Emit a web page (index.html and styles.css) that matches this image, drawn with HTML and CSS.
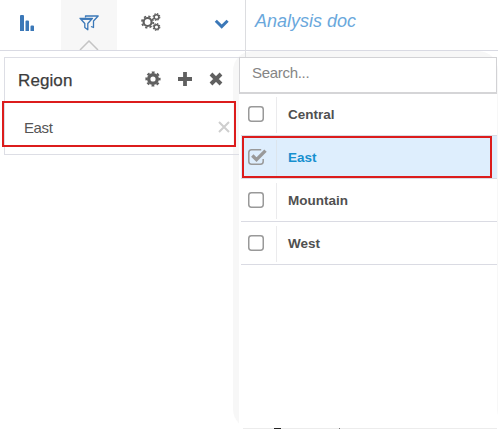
FILE: index.html
```html
<!DOCTYPE html>
<html lang="en">
<head>
<meta charset="utf-8">
<title>Analysis doc</title>
<link rel="stylesheet" href="styles.css">
</head>
<body>
<div class="app">
  <header class="header">
    <nav class="tabs">
      <div class="tab">
        <svg class="icon-bars" width="15" height="16" viewBox="0 0 15 16"><path fill="#3b78b8" d="M0 1q0-1 1-1h2q1 0 1 1v15H0zM5.500 6.500q0-1 1-1h1.500q1 0 1 1V16H5.500zM10.500 11.500q0-1 1-1h1.500q1 0 1 1V16h-3.500z"/></svg>
      </div>
      <div class="tab tab-active">
        <svg class="icon-filter" width="21" height="17" viewBox="0 0 21 17" fill="none" stroke="#3b78b8" stroke-width="1.300" stroke-linejoin="round"><path d="M6.500 3.500V2h12.700L14.500 7v6.500l-2.500-1"/><path fill="#f7f7f7" d="M1 4.300h12.500L8.800 9.500v6.300l-3-2.300v-4z"/><path d="M2.500 5.300h10"/></svg>
        <svg class="tab-caret" width="20" height="10" viewBox="0 0 20 10"><path d="M1 10 10 1l9 9" fill="none" stroke="#c4c4c4" stroke-width="1.500"/></svg>
      </div>
      <div class="tab tab-gears">
        <svg class="icon-gears" width="20" height="18" viewBox="0 0 20 18" fill="none" stroke="#606060"><circle cx="6.600" cy="9" r="4" stroke-width="2.200"/><circle cx="6.600" cy="9" r="5.700" stroke-width="1.700" stroke-dasharray="2.240 2.240"/><circle cx="15.500" cy="4" r="2.300" stroke-width="1.500"/><circle cx="15.500" cy="4" r="3.300" stroke-width="1.200" stroke-dasharray="1.480 1.110"/><circle cx="15.500" cy="14" r="2.300" stroke-width="1.500"/><circle cx="15.500" cy="14" r="3.300" stroke-width="1.200" stroke-dasharray="1.480 1.110"/></svg>
      </div>
      <div class="tab tab-more">
        <svg width="16" height="10" viewBox="0 0 16 10"><path d="m1.800 1.800 5.900 5.800 5.900-5.800" fill="none" stroke="#3b78b8" stroke-width="3"/></svg>
      </div>
    </nav>
    <h1 class="doc-title">Analysis doc</h1>
  </header>

  <main class="body">
    <section class="card">
      <div class="card-head">
        <h2>Region</h2>
        <div class="actions">
          <svg width="16" height="16" viewBox="0 0 16 16" fill="none" stroke="#606060"><circle cx="8" cy="8" r="4.300" stroke-width="3.400"/><circle cx="8" cy="8" r="6.600" stroke-width="2" stroke-dasharray="2.800 2.384" stroke-dashoffset="1.400"/></svg>
          <svg width="14" height="14" viewBox="0 0 14 14"><path d="M7 0v14M0 7h14" stroke="#606060" stroke-width="3.800"/></svg>
          <svg width="14" height="14" viewBox="0 0 14 14"><path d="m2 2 10 10M12 2 2 12" stroke="#606060" stroke-width="3.900"/></svg>
        </div>
      </div>
      <div class="value">
        <span>East</span>
        <svg width="12" height="12" viewBox="0 0 12 12"><path d="m1 1 10 10M11 1 1 11" stroke="#cecece" stroke-width="2"/></svg>
      </div>
    </section>
  </main>

  <div class="halo"></div>
  <aside class="picker">
    <div class="search">Search...</div>
    <ul class="options">
      <li class="option"><span class="check"><svg width="16" height="16" viewBox="0 0 16 16"><rect class="box" x=".75" y=".75" width="14.500" height="14.500" rx="2.700"/></svg></span><span class="label">Central</span></li>
      <li class="option selected"><span class="check"><svg width="20" height="18" viewBox="0 0 20 18" fill="none" stroke="#999"><path d="M15.200 11V13.500q0 2.700-2.700 2.700H3.500q-2.700 0-2.700-2.700V4.500q0-2.700 2.700-2.700h9.700" stroke-width="1.500"/><path d="m4.300 7.500 4.200 4.200L17.500 2.600" stroke-width="3.400"/></svg></span><span class="label">East</span></li>
      <li class="option"><span class="check"><svg width="16" height="16" viewBox="0 0 16 16"><rect class="box" x=".75" y=".75" width="14.500" height="14.500" rx="2.700"/></svg></span><span class="label">Mountain</span></li>
      <li class="option"><span class="check"><svg width="16" height="16" viewBox="0 0 16 16"><rect class="box" x=".75" y=".75" width="14.500" height="14.500" rx="2.700"/></svg></span><span class="label">West</span></li>
    </ul>
    <div class="fragment"><i class="mark mark-dark"></i><i class="mark mark-small"></i></div>
  </aside>
  <div class="highlight highlight-value"></div>
  <div class="highlight highlight-option"></div>
</div>
</body>
</html>
```
FILE: styles.css
```css
* { box-sizing: border-box; }
body { margin: 0; background: #fff; font-family: "Liberation Sans", Arial, sans-serif; color: #444; }
svg { display: block; flex: none; }
.app { position: relative; width: 498px; height: 429px; overflow: hidden; }

.header { display: flex; height: 51px; border-bottom: 1px solid #d9dae3; }
.tabs { display: flex; width: 246px; height: 57px; border-right: 1px solid #dcdde0; }
.tab { position: relative; width: 61px; height: 50px; padding: 15px 0 0 20px; }
.tab-active { width: 56px; padding: 14px 0 0 18px; background: #f7f7f7; }
.tab-caret { position: absolute; left: 18px; bottom: 0; }
.tab-gears { width: 70px; padding: 13px 0 0 24px; }
.tab-more { width: 58px; padding: 19px 0 0 27px; }
.doc-title { margin: 0; padding: 10px 0 0 9px; font-size: 18px; line-height: 22px; font-weight: 400; font-style: italic; color: #6aa8dc; }

.body { padding: 6px 0 0 4px; }
.card { width: 236px; height: 98px; border: 1px solid #dddee5; }
.card-head { display: flex; align-items: center; justify-content: space-between; height: 42px; padding: 0 16px 0 13px; }
.card-head h2 { margin: 3px 0 0; font-size: 17px; line-height: 20px; letter-spacing: .1px; font-weight: 400; color: #3c3c3c; -webkit-text-stroke: .25px #3c3c3c; }
.actions { display: flex; align-items: center; gap: 17px; }
.value { display: flex; align-items: center; justify-content: space-between; height: 54px; padding: 0 9px 0 19px; font-size: 15px; letter-spacing: -.4px; color: #555; }

.halo { position: absolute; z-index: -1; left: 233px; top: 51px; width: 265px; height: 378px; border-radius: 20px; background: #f7f7f7; }
.picker { position: absolute; left: 239px; top: 57px; width: 258px; height: 372px; background: #fff; }
.search { height: 37px; padding: 6px 0 0 12px; border: 1px solid #d2d2d5; border-bottom: 2px solid #d5d5d7; font-size: 15px; line-height: 18px; letter-spacing: -.3px; color: #858585; }
.options { margin: 0 0 0 2px; padding: 0; list-style: none; }
.option { display: flex; align-items: center; height: 43px; padding-top: 1px; border-bottom: 1px solid #dadbe3; }
.option:first-child { height: 42px; padding-top: 0; }
.check { display: flex; align-items: center; width: 36px; height: 36px; padding: 0 0 2px 7px; border-right: 1px solid #ebebed; }
.option:first-child .check { padding-bottom: 1px; }
.box { fill: none; stroke: #999; stroke-width: 1.500px; }
.label { padding-left: 11px; font-size: 13.500px; line-height: 18px; font-weight: 700; color: #505050; }
.selected { background: #deeefd; }
.selected .check { padding-bottom: 1px; border-color: #dce5ed; }
.selected .label { color: #1790cf; }
.fragment { display: flex; height: 1px; margin: 163px 0 0 4px; padding-left: 31px; background: #ececec; }
.mark { height: 1px; background: #222; }
.mark-dark { width: 7px; }
.mark-small { width: 1px; margin-left: 58px; background: #777; }

.highlight { position: absolute; border: 2px solid #dc1c1c; }
.highlight-value { left: 2px; top: 101px; width: 234px; height: 46px; }
.highlight-option { left: 242px; top: 136px; width: 250px; height: 42px; }
```
